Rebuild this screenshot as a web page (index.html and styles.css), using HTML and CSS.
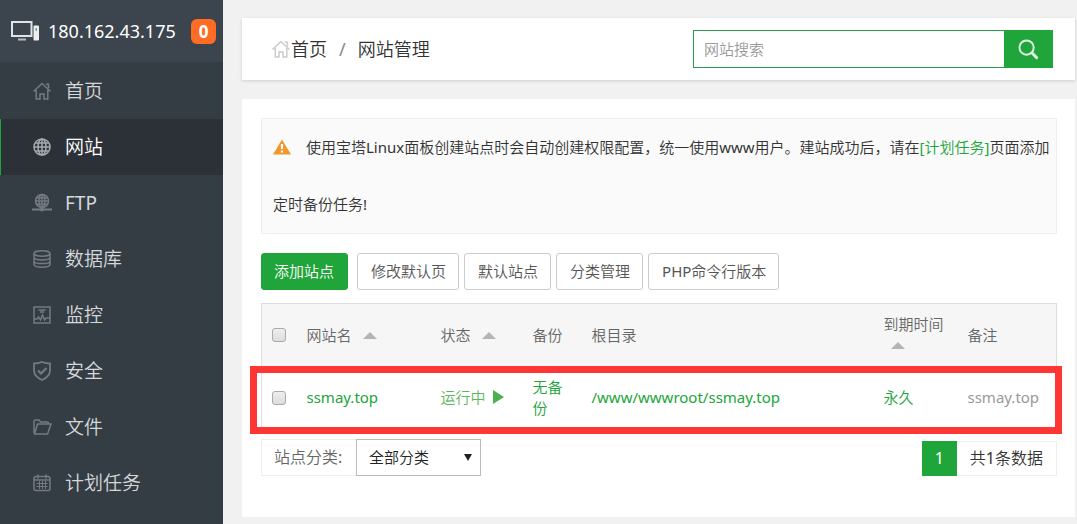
FILE: index.html
```html
<!DOCTYPE html>
<html lang="zh-CN">
<head>
    <meta charset="UTF-8">
    <meta name="viewport" content="width=device-width, initial-scale=1.0">
    <title>网站管理</title>
    <link rel="stylesheet" href="styles.css">
</head>
<body>
    <div class="layout">
        <aside class="sidebar">
            <div class="server">
                <svg class="server-icon" viewBox="0 0 28 20" aria-hidden="true">
                    <rect x="1" y="1" width="19.500" height="14" fill="none" stroke="#dfe3e8" stroke-width="2"/>
                    <rect x="7" y="17.500" width="8" height="2" fill="#b4bac0"/>
                    <rect x="22.500" y="4.500" width="5.500" height="15" rx="1" fill="#eceff2"/>
                    <rect x="24.500" y="7" width="1.500" height="3" fill="#8b949c"/>
                </svg>
                <span class="ip">180.162.43.175</span>
                <span class="badge">0</span>
            </div>
            <nav class="menu">
                <a href="#">
                    <svg viewBox="0 0 18 18"><path d="M.500 9.500 9 1.500l8.500 8M13 2.200h2.500v4M3.200 8v9H7v-5h4v5h3.800V8"/></svg>
                    首页
                </a>
                <a href="#" class="active">
                    <svg viewBox="0 0 18 18"><circle cx="9" cy="9" r="8"/><ellipse cx="9" cy="9" rx="4" ry="8"/><path d="M9 1v16M1 9h16M2.500 5h13M2.500 13h13"/></svg>
                    网站
                </a>
                <a href="#">
                    <svg viewBox="0 0 18 18"><circle cx="9" cy="7" r="6.500"/><ellipse cx="9" cy="7" rx="3" ry="6.500"/><path d="M9 1v15M2.500 7h13M3.500 4h11M3.500 10h11"/><path d="M-1 15.500h20" stroke-width="2"/><circle cx="9" cy="15.500" r="1.200"/></svg>
                    FTP
                </a>
                <a href="#">
                    <svg viewBox="0 0 18 18"><ellipse cx="9" cy="3.500" rx="8" ry="2.700"/><path d="M1 3.500v11c0 1.600 3.500 2.700 8 2.700s8-1.100 8-2.700v-11M1 7.200c0 1.600 3.500 2.700 8 2.700s8-1.100 8-2.700M1 10.900c0 1.600 3.500 2.700 8 2.700s8-1.100 8-2.700"/></svg>
                    数据库
                </a>
                <a href="#">
                    <svg viewBox="0 0 18 18"><path d="M1 1h16v16H1zM5.500 4h7M7 6h4M1 13h3l1.500-2 2 3 2-5 2 5 1.500-2H17"/></svg>
                    监控
                </a>
                <a href="#">
                    <svg viewBox="0 0 18 18"><path d="M9 0c2.500 1 5 1.500 8 1.500v7c0 4.500-3.500 7.500-8 9.500-4.500-2-8-5-8-9.500v-7C4 1.500 6.500 1 9 0z" stroke-width="1.800"/><path d="m5 8.500 3 3L13.500 6" stroke-width="2.200"/></svg>
                    安全
                </a>
                <a href="#">
                    <svg viewBox="0 0 18 18"><path d="M1 15V3.500C1 2.500 1.500 2 2.500 2H6l1.500 2H14c1 0 1.500.500 1.500 1.500V6M1.500 16h13L18 6H4.500L1.500 16z"/></svg>
                    文件
                </a>
                <a href="#">
                    <svg viewBox="0 0 18 18"><rect x="1" y="2.500" width="16" height="14" rx="2"/><path d="M5 .500v4M13 .500v4M1 6h16"/><path d="M3.500 9.500h11M3.500 12.500h11M6.500 7v8M9.500 7v8M12.500 7v8" stroke-width="1"/></svg>
                    计划任务
                </a>
            </nav>
        </aside>

        <main class="main">
            <header class="topbar">
                <div class="breadcrumb">
                    <svg viewBox="0 0 18 18" aria-hidden="true"><path d="M.500 9.500 9 1.500l8.500 8M13 2.200h2.500v4M3.200 8v9H7v-5h4v5h3.800V8"/></svg>
                    <a href="#">首页</a>
                    <span class="slash">/</span>
                    <span>网站管理</span>
                </div>
                <form class="search">
                    <input type="text" placeholder="网站搜索" aria-label="网站搜索">
                    <button type="button" aria-label="搜索">
                        <svg viewBox="0 0 22 22"><circle cx="9" cy="9" r="7.500"/><path d="m14.500 14.500 5 5" stroke-width="3"/></svg>
                    </button>
                </form>
            </header>

            <section class="panel">
                <p class="notice"><svg viewBox="0 0 18 16" aria-hidden="true"><path d="M9 .500 18 15.500H0z" fill="#f0962a"/><path d="M9 5v5M9 11.500v2" stroke="#fff" stroke-width="2.200"/></svg>使用宝塔Linux面板创建站点时会自动创建权限配置，统一使用www用户。建站成功后，请在<a href="#">[计划任务]</a>页面添加定时备份任务!</p>

                <div class="toolbar">
                    <button class="btn btn-primary">添加站点</button>
                    <button class="btn">修改默认页</button>
                    <button class="btn">默认站点</button>
                    <button class="btn">分类管理</button>
                    <button class="btn">PHP命令行版本</button>
                </div>

                <div class="table-wrap">
                    <table>
                        <colgroup>
                            <col class="col-check">
                            <col class="col-name">
                            <col class="col-status">
                            <col class="col-backup">
                            <col>
                            <col class="col-expire">
                            <col class="col-note">
                        </colgroup>
                        <thead>
                            <tr>
                                <th><input type="checkbox" aria-label="全选"></th>
                                <th>网站名<span class="caret"></span></th>
                                <th>状态<span class="caret"></span></th>
                                <th>备份</th>
                                <th>根目录</th>
                                <th>到期时间<span class="caret caret-below"></span></th>
                                <th>备注</th>
                            </tr>
                        </thead>
                        <tbody>
                            <tr>
                                <td><input type="checkbox" aria-label="ssmay.top"></td>
                                <td><a href="#">ssmay.top</a></td>
                                <td><a href="#" class="running">运行中<span class="play"></span></a></td>
                                <td><a href="#">无备份</a></td>
                                <td><a href="#">/www/wwwroot/ssmay.top</a></td>
                                <td><a href="#">永久</a></td>
                                <td class="note">ssmay.top</td>
                            </tr>
                        </tbody>
                    </table>
                    <div class="highlight"></div>
                </div>

                <div class="table-footer">
                    <div class="category">
                        <label for="category">站点分类:</label>
                        <div class="select">
                            <select id="category">
                                <option>全部分类</option>
                            </select>
                            <span class="arrow"></span>
                        </div>
                    </div>
                    <div class="pager">
                        <span class="current">1</span>
                        <span class="total">共1条数据</span>
                    </div>
                </div>
            </section>
        </main>
    </div>
</body>
</html>
```
FILE: styles.css
```css
*{
    box-sizing: border-box;
}
body{
    margin: 0;
    background-color: #f1f1f1;
    color: #333;
    font-family: "Noto Sans", "Noto Sans CJK SC DemiLight", "Noto Sans CJK SC", sans-serif;
    font-size: 15px;
    line-height: 21px;
}
a{
    color: #20a53a;
    text-decoration: none;
}
button, input, select{
    font: inherit;
}
.layout{
    display: flex;
    min-height: 100vh;
}

/* sidebar */
.sidebar{
    flex: 0 0 223px;
    background-color: #353d44;
}
.server{
    display: flex;
    align-items: center;
    height: 62px;
    padding: 0 7px 0 11px;
    background-color: #3c444d;
    color: #fff;
    font-size: 18px;
}
.server-icon{
    width: 28px;
    height: 20px;
    margin-right: 9px;
}
.badge{
    width: 25px;
    margin-left: auto;
    border-radius: 6px;
    background-color: #ff6c23;
    font-size: 17px;
    font-weight: 700;
    line-height: 25px;
    text-align: center;
}
.menu{
    padding-top: 1px;
}
.menu a{
    display: flex;
    align-items: center;
    gap: 14px;
    height: 56px;
    padding-left: 32px;
    border-left: 1px solid transparent;
    color: #d5d8db;
    font-size: 19px;
}
.menu svg{
    width: 18px;
    height: 18px;
    overflow: visible;
    fill: none;
    stroke: #747a80;
    stroke-width: 1.5;
}
.menu .active{
    border-left-color: #20a53a;
    background-color: #2c3138;
    color: #fff;
}
.menu .active svg{
    stroke: #a6abb0;
}

/* main */
.main{
    flex: 1;
    min-width: 0;
    padding: 18px 2px 7px 19px;
}
.topbar{
    display: flex;
    align-items: center;
    justify-content: space-between;
    height: 62px;
    margin-bottom: 19px;
    padding: 0 22px 0 30px;
    background-color: #fff;
    box-shadow: 0 1px 3px rgba(0, 0, 0, 0.15);
}
.breadcrumb{
    display: flex;
    align-items: center;
    font-size: 18px;
}
.breadcrumb a{
    color: #333;
}
.breadcrumb svg{
    width: 18px;
    height: 18px;
    margin-right: 1px;
    fill: none;
    stroke: #ccc;
    stroke-width: 1.5;
}
.slash{
    margin: 0 12px;
    color: #888;
}
.search{
    display: flex;
    width: 360px;
    height: 38px;
}
.search input{
    flex: 1;
    min-width: 0;
    padding: 0 10px;
    border: 1px solid #2c9a4b;
    border-right: none;
    outline: none;
}
.search input::placeholder{
    color: #999;
}
.search button{
    display: flex;
    align-items: center;
    justify-content: center;
    width: 49px;
    padding: 0;
    border: none;
    background-color: #20a53a;
    cursor: pointer;
}
.search svg{
    width: 21px;
    height: 21px;
    fill: none;
    stroke: #e2f5e5;
    stroke-width: 2;
    stroke-linecap: round;
}
.panel{
    min-height: 418px;
    padding: 19px 18px 19px 19px;
    background-color: #fff;
}
.notice{
    margin: 0 0 19px;
    padding: 0 2px 0 11px;
    border: 1px solid #eee;
    background-color: #fafafa;
    line-height: 57px;
}
.notice svg{
    width: 18px;
    height: 16px;
    margin-right: 15px;
    vertical-align: -2px;
}

/* buttons */
.toolbar{
    display: flex;
    gap: 5px;
    margin-bottom: 13px;
}
.btn{
    height: 37px;
    padding: 0 12px 0 13px;
    border: 1px solid #ccc;
    border-radius: 3px;
    background-color: #fff;
    color: #555;
    cursor: pointer;
}
.btn-primary{
    margin-right: 4px;
    padding: 0 13px 0 12px;
    border-color: #20a53a;
    background-color: #20a53a;
    color: #fff;
}

/* table */
.table-wrap{
    position: relative;
    margin-bottom: 9px;
}
table{
    width: 100%;
    border: 1px solid #ddd;
    border-collapse: collapse;
    table-layout: fixed;
}
th, td{
    height: 63px;
    padding: 0 10px;
    text-align: left;
    font-weight: 400;
}
th{
    background-color: #f6f6f6;
    color: #666;
}
.col-check{
    width: 35px;
}
.col-name{
    width: 134px;
}
.col-status{
    width: 92px;
}
.col-backup{
    width: 59px;
}
.col-expire{
    width: 84px;
}
.col-note{
    width: 99px;
}
input[type="checkbox"]{
    display: block;
    width: 14px;
    height: 14px;
    margin: 0;
    border: 1px solid #aaa;
    border-radius: 3px;
    background: linear-gradient(#eee, #ddd);
    appearance: none;
}
.caret{
    display: inline-block;
    margin-left: 11px;
    border: 7px solid transparent;
    border-top: none;
    border-bottom-color: #b4b4b4;
    vertical-align: 2px;
}
.caret-below{
    margin-left: 7px;
}
.running{
    color: #5cb85c;
    white-space: nowrap;
}
.play{
    display: inline-block;
    margin-left: 7px;
    border: 7px solid transparent;
    border-right: none;
    border-left: 11px solid #4cb050;
    vertical-align: -1px;
}
.note{
    color: #999;
}
.highlight{
    position: absolute;
    top: 63px;
    right: -5px;
    left: -11px;
    height: 68px;
    border: 7px solid #ff3636;
    pointer-events: none;
}

/* footer */
.table-footer{
    display: flex;
    align-items: flex-end;
    justify-content: space-between;
    font-size: 16px;
}
.category{
    display: flex;
    height: 37px;
}
.category label{
    width: 95px;
    padding-left: 12px;
    border: 1px solid #eee;
    border-right: none;
    color: #666;
    line-height: 35px;
}
.select{
    position: relative;
    width: 125px;
}
.select select{
    width: 100%;
    height: 100%;
    padding: 0 12px;
    border: 1px solid #bbb;
    border-radius: 0;
    background-color: #fff;
    color: #222;
    font-size: 15px;
    appearance: none;
}
.arrow{
    position: absolute;
    top: 15px;
    right: 9px;
    border: 4px solid transparent;
    border-top: 7px solid #222;
    border-bottom: none;
    pointer-events: none;
}
.pager{
    display: flex;
    line-height: 35px;
}
.current{
    width: 35px;
    background-color: #20a53a;
    color: #fff;
    text-align: center;
}
.total{
    padding: 0 13px;
    border: 1px solid #eee;
    border-left: none;
    line-height: 33px;
}
```
